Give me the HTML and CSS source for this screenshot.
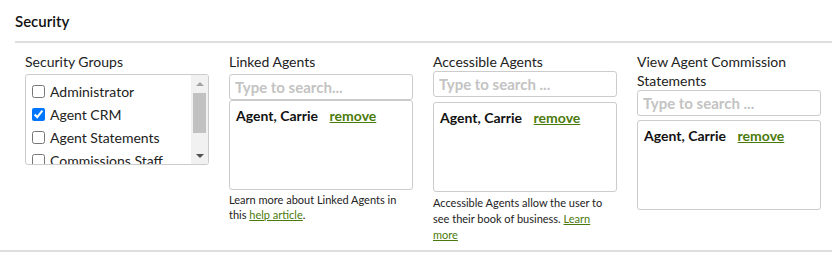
FILE: index.html
```html
<!DOCTYPE html>
<html lang="en">
<head>
    <meta charset="UTF-8"/>
    <title>Security</title>
    <link rel="stylesheet" href="styles.css">
</head>
<body>
    <section class="security">
        <h2>Security</h2>
        <div class="fields">
            <div class="field">
                <label class="field-label">Security Groups</label>
                <div class="group-list">
                    <div class="group-items">
                        <label class="group"><input type="checkbox"> Administrator</label>
                        <label class="group"><input type="checkbox" checked> Agent CRM</label>
                        <label class="group"><input type="checkbox"> Agent Statements</label>
                        <label class="group"><input type="checkbox"> Commissions Staff</label>
                    </div>
                    <div class="scrollbar">
                        <span class="arrow arrow-up"></span>
                        <span class="thumb"></span>
                        <span class="arrow arrow-down"></span>
                    </div>
                </div>
            </div>

            <div class="field">
                <label class="field-label">Linked Agents</label>
                <input class="search" type="text" placeholder="Type to search...">
                <div class="picked">
                    <span class="agent">Agent, Carrie</span>
                    <a href="#" class="remove">remove</a>
                </div>
                <p class="help">Learn more about Linked Agents in this <a href="#">help article</a>.</p>
            </div>

            <div class="field field-accessible">
                <label class="field-label">Accessible Agents</label>
                <input class="search" type="text" placeholder="Type to search ...">
                <div class="picked">
                    <span class="agent">Agent, Carrie</span>
                    <a href="#" class="remove">remove</a>
                </div>
                <p class="help">Accessible Agents allow the user to see their book of business. <a href="#">Learn more</a></p>
            </div>

            <div class="field field-statements">
                <label class="field-label">View Agent Commission Statements</label>
                <input class="search" type="text" placeholder="Type to search ...">
                <div class="picked">
                    <span class="agent">Agent, Carrie</span>
                    <a href="#" class="remove">remove</a>
                </div>
            </div>
        </div>
    </section>
</body>
</html>
```

FILE: styles.css
```css
* {
    margin: 0;
    padding: 0;
    box-sizing: border-box;
}

body {
    font-family: Lato, "Open Sans", sans-serif;
    background-color: #fff;
    color: #222;
}

.security {
    padding-left: 15px;
    border-bottom: 2px solid #dedede;
    padding-bottom: 7px;
}

.security h2 {
    font-size: 15px;
    font-weight: 600;
    color: #111;
    height: 43px;
    padding-top: 12px;
    border-bottom: 2px solid #dedede;
}

.fields {
    display: flex;
    gap: 20px;
    padding: 9px 0 0 10px;
}

.field {
    width: 184px;
    display: flex;
    flex-direction: column;
}

.field-label {
    font-size: 14px;
    line-height: 19px;
    color: #222;
    margin-bottom: 3px;
}

/* security groups list with its classic scrollbar */
.group-list {
    height: 91px;
    border: 1px solid #ccc;
    border-radius: 3px;
    display: flex;
    overflow: hidden;
}

.group-items {
    flex: 1;
    overflow: hidden;
    padding: 5px 0 0 6px;
}

.group {
    display: flex;
    align-items: center;
    gap: 5px;
    height: 23px;
    font-size: 14px;
    color: #222;
    white-space: nowrap;
}

.group input {
    width: 13px;
    height: 13px;
    margin: 0;
}

.scrollbar {
    width: 17px;
    background-color: #f1f1f1;
    display: flex;
    flex-direction: column;
    align-items: center;
}

.arrow {
    height: 17px;
    width: 17px;
    display: flex;
    justify-content: center;
    align-items: center;
}

.arrow::before {
    content: "";
    border-left: 4px solid transparent;
    border-right: 4px solid transparent;
}

.arrow-up::before {
    border-bottom: 4px solid #a3a3a3;
}

.arrow-down {
    margin-top: auto;
}

.arrow-down::before {
    border-top: 4px solid #505050;
}

.thumb {
    width: 13px;
    height: 40px;
    margin-top: 1px;
    background-color: #c1c1c1;
}

.search {
    height: 26px;
    border: 1px solid #ccc;
    border-radius: 3px;
    padding: 0 5px;
    font-family: inherit;
    font-size: 15px;
    font-weight: 700;
}

.search::placeholder {
    color: #c3c3c3;
}

.picked {
    height: 90px;
    border: 1px solid #ccc;
    border-radius: 3px;
    padding: 6px 6px;
    font-size: 14px;
}

.agent {
    font-weight: 700;
    color: #111;
    margin-right: 8px;
}

.remove {
    font-weight: 700;
    color: #4b7a0c;
}

.help {
    font-size: 11px;
    line-height: 15px;
    color: #222;
    margin-top: 2px;
}

.help a {
    color: #4b7a0c;
}

.field-accessible .field-label {
    margin-bottom: 0;
}

.field-accessible .search {
    margin-bottom: 5px;
}

.field-accessible .help {
    margin-top: 3px;
    line-height: 16px;
}

.field-statements .field-label {
    margin-bottom: 0;
}

.field-statements .search {
    margin-bottom: 4px;
}
```
